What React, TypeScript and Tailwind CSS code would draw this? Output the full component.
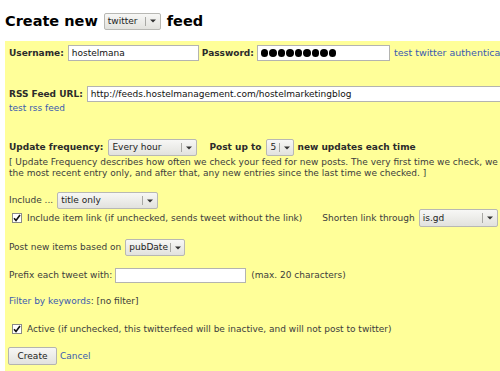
import React from 'react';

const label = "font-bold text-[#2b2b2b]";
const link = "text-[#3a5ab0]";

function Select({ value, w, h = 17, arrowW = 14 }: { value: string; w: number; h?: number; arrowW?: number }) {
  return (
    <div
      className="flex items-center border border-[#b8b8b4] rounded-[2px] bg-gradient-to-b from-[#f7f7f5] to-[#e2e2de] text-[#222] shrink-0"
      style={{ width: w, height: h }}
    >
      <span className="flex-1 pl-[3px] whitespace-nowrap overflow-hidden">{value}</span>
      <span className="w-px h-[60%] bg-[#a8a8a4]" />
      <span className="flex items-center justify-center" style={{ width: arrowW }}>
        <svg width="6" height="4" viewBox="0 0 6 4"><path d="M0 0.5h6L3 3.5z" fill="#333" /></svg>
      </span>
    </div>
  );
}

function Input({ value, w, h = 16, pw }: { value?: string; w: number; h?: number; pw?: boolean }) {
  return (
    <div
      className="flex items-center border border-[#b4b4b0] bg-white pl-[3px] text-[#111] shrink-0 overflow-hidden whitespace-nowrap"
      style={{ width: w, height: h }}
    >
      {pw ? (
        <span className="flex gap-[1px]">
          {Array.from({ length: 9 }).map((_, i) => (
            <span key={i} className="w-[7.5px] h-[7.5px] rounded-full bg-black" />
          ))}
        </span>
      ) : (
        value
      )}
    </div>
  );
}

function Check() {
  return (
    <span className="w-[10px] h-[10px] border border-[#8a8a86] bg-white flex items-center justify-center shrink-0">
      <svg width="8" height="8" viewBox="0 0 8 8"><path d="M1 4.2l2 2.2L7 1" stroke="#111" strokeWidth="1.6" fill="none" /></svg>
    </span>
  );
}

export default function App() {
  return (
    <div className="w-[500px] h-[371px] overflow-hidden bg-white font-['DejaVu_Sans','Verdana',sans-serif] text-[9px] text-[#3c3c3c] leading-none">
      {/* Heading */}
      <div className="flex items-center h-[20px] mt-[11px] mb-[10px] pl-[5px] gap-[6px] text-[14.5px] font-bold text-black">
        <span>Create new</span>
        <div className="text-[9px] font-normal">
          <Select value="twitter" w={57} h={17} arrowW={14} />
        </div>
        <span>feed</span>
      </div>

      {/* Form panel */}
      <div className="w-[620px] ml-[5px] bg-[#ffff99] pl-[4px] pt-[4px] pb-[20px]">
        <div className="flex items-center h-[16px]">
          <span className={label}>Username:</span>
          <span className="ml-[4px]"><Input value="hostelmana" w={131} /></span>
          <span className={label + " ml-[3px]"}>Password:</span>
          <span className="ml-[3px]"><Input pw w={133} /></span>
          <span className={link + " ml-[4px] text-[9.5px]"}>test twitter authentication</span>
        </div>

        <div className="flex items-center h-[16px] mt-[25px]">
          <span className={label}>RSS Feed URL:</span>
          <span className="ml-[4px]"><Input value="http://feeds.hostelmanagement.com/hostelmarketingblog" w={450} /></span>
        </div>
        <div className="flex items-center h-[12px]">
          <span className={link}>test rss feed</span>
        </div>

        <div className="flex items-center h-[17px] mt-[25px]">
          <span className={label}>Update frequency:</span>
          <span className="ml-[5px]"><Select value="Every hour" w={89} /></span>
          <span className={label + " ml-[12px]"}>Post up to</span>
          <span className="ml-[5px]"><Select value="5" w={28} arrowW={13} /></span>
          <span className={label + " ml-[3px]"}>new updates each time</span>
        </div>
        <div className="mt-[1px] leading-[11px] w-[500px] whitespace-nowrap">
          <div>[ Update Frequency describes how often we check your feed for new posts. The very first time we check, we post</div>
          <div>the most recent entry only, and after that, any new entries since the last time we checked. ]</div>
        </div>

        <div className="flex items-center h-[17px] mt-[13px]">
          <span>Include ...</span>
          <span className="ml-[4px]"><Select value="title only" w={101} /></span>
        </div>
        <div className="flex items-center h-[18px]">
          <span className="ml-[3px]"><Check /></span>
          <span className="ml-[5px]">Include item link (if unchecked, sends tweet without the link)</span>
          <span className="ml-[20px]">Shorten link through</span>
          <span className="ml-[4px]"><Select value="is.gd" w={79} h={18} /></span>
        </div>

        <div className="flex items-center h-[17px] mt-[12px]">
          <span>Post new items based on</span>
          <span className="ml-[4px]"><Select value="pubDate" w={60} arrowW={13} /></span>
        </div>

        <div className="flex items-center h-[16px] mt-[11px]">
          <span>Prefix each tweet with:</span>
          <span className="ml-[3px]"><Input w={131} h={15} /></span>
          <span className="ml-[5px]">(max. 20 characters)</span>
        </div>

        <div className="flex items-center h-[12px] mt-[12px]">
          <span className={link}>Filter by keywords</span>
          <span>: [no filter]</span>
        </div>

        <div className="flex items-center h-[14px] mt-[15px]">
          <span className="ml-[3px]"><Check /></span>
          <span className="ml-[5px]">Active (if unchecked, this twitterfeed will be inactive, and will not post to twitter)</span>
        </div>

        <div className="flex items-center h-[20px] mt-[10px]">
          <button className="w-[49px] h-[18px] border border-[#b4b4b0] rounded-[2px] bg-gradient-to-b from-[#f7f7f5] to-[#e2e2de] text-[#222] text-[9px] ml-[-1px]">
            Create
          </button>
          <span className={link + " ml-[3px]"}>Cancel</span>
        </div>
      </div>
    </div>
  );
}
